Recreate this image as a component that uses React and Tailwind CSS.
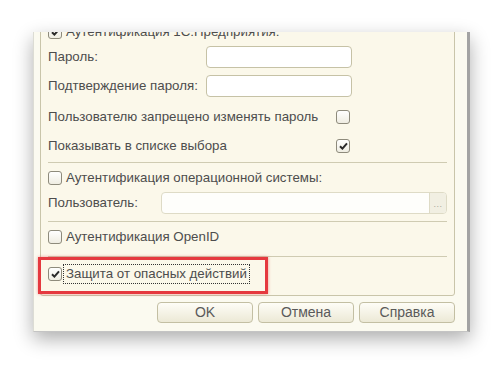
import React from 'react';

const font = { fontFamily: '"Liberation Sans", Arial, sans-serif' };

function Box({ checked }) {
  return (
    <span className="w-[14px] h-[14px] rounded-[3px] border border-[#8e8b7c] bg-gradient-to-b from-white to-[#efede2] flex items-center justify-center shrink-0">
      {checked && (
        <svg width="9" height="8" viewBox="0 0 9 8">
          <path d="M1 4.2 L3.4 6.6 L8 1.4" stroke="#2a2a2a" strokeWidth="2" fill="none" />
        </svg>
      )}
    </span>
  );
}

function Field({ className = '' }) {
  return <div className={`h-[22px] rounded-[4px] border border-[#c6c2a6] bg-white ${className}`} />;
}

function Sep({ className = '' }) {
  return <div className={`h-px bg-[#cfcbb2] ${className}`} />;
}

function Btn({ children }) {
  return (
    <div className="w-[96px] h-[21px] rounded-[4px] border border-[#c3bfa3] bg-gradient-to-b from-[#fefdf7] to-[#ece9d6] flex items-center justify-center text-[14px] text-[#5a5a5a]">
      {children}
    </div>
  );
}

export default function App() {
  return (
    <div className="w-[500px] h-[365px] bg-white overflow-hidden pt-[32px] pl-[33px]" style={font}>
      <div className="relative w-[437px] h-[300px] bg-[#fbfaf0] border-r-[3px] border-r-[#a3a3a3] border-b border-b-[#c4c4c4] border-l border-l-[#dcdcd4] shadow-[0_7px_18px_rgba(0,0,0,0.32)] overflow-hidden">
        <div className="ml-[6px] w-[415px] -mt-[14px] relative border border-[#c9c5aa] rounded-[3px] bg-[#fbf8ea] px-[7px] pb-[9px] text-[13.3px] text-[#4d4d4d]">
          {/* first row is cut by the top edge, as in the capture */}
          <div className="h-[26px] flex items-center gap-[4px]">
            <Box checked />
            <span>Аутентификация 1С:Предприятия:</span>
          </div>
          <div className="h-[24px] flex items-center">
            <span className="w-[158px]">Пароль:</span>
            <Field className="w-[146px]" />
          </div>
          <div className="mt-[5px] h-[24px] flex items-center">
            <span className="w-[158px]">Подтверждение пароля:</span>
            <Field className="w-[146px]" />
          </div>
          <div className="mt-[7px] h-[24px] flex items-center">
            <span className="w-[288px]">Пользователю запрещено изменять пароль</span>
            <Box />
          </div>
          <div className="mt-[5px] h-[24px] flex items-center">
            <span className="w-[288px]">Показывать в списке выбора</span>
            <Box checked />
          </div>
          <Sep className="mt-[4px]" />
          <div className="mt-[3px] h-[24px] flex items-center gap-[4px]">
            <Box />
            <span>Аутентификация операционной системы:</span>
          </div>
          <div className="mt-[1px] h-[24px] flex items-center">
            <span className="w-[113px]">Пользователь:</span>
            <div className="flex-1 h-[22px] rounded-[4px] border border-[#dedbc6] bg-[#fefefb] flex justify-end overflow-hidden">
              <div className="w-[17px] h-full border-l border-[#dedbc6] bg-[#f1efe2] flex items-end justify-center pb-[4px] text-[9px] leading-none text-[#a9a79a] tracking-[0.5px]">...</div>
            </div>
          </div>
          <Sep className="mt-[6px]" />
          <div className="mt-[3px] h-[24px] flex items-center gap-[4px]">
            <Box />
            <span>Аутентификация OpenID</span>
          </div>
          <Sep className="mt-[7px]" />
          <div className="mt-[5px] h-[24px] flex items-center gap-[1px]">
            <Box checked />
            <span className="px-[2px] py-[2px] border border-dotted border-[#333] leading-[14px]">Защита от опасных действий</span>
          </div>
          <div className="absolute left-[-3px] top-[238px] w-[230px] h-[37px] border-[3px] border-[#e5393f] shadow-[0_0_3px_rgba(229,57,63,0.5)]" />
        </div>
        <div className="mt-[6px] ml-[6px] w-[415px] flex justify-end gap-[5px]">
          <Btn>OK</Btn>
          <Btn>Отмена</Btn>
          <Btn>Справка</Btn>
        </div>
      </div>
    </div>
  );
}
